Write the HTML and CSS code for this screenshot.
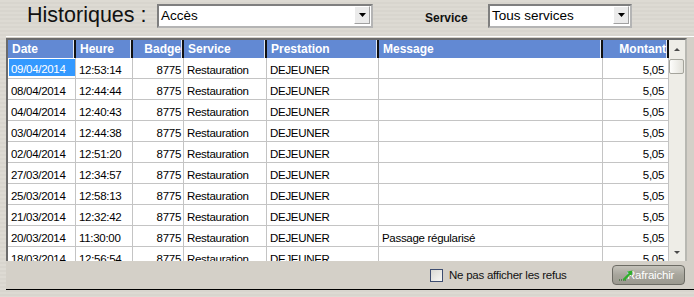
FILE: index.html
```html
<!DOCTYPE html>
<html lang="fr">

<head>
    <meta charset="UTF-8">
    <title>Historiques</title>
    <link rel="stylesheet" href="styles.css">
</head>

<body>
    <div class="toolbar">
        <div class="title">Historiques :</div>
        <div class="combo combo-acces">
            <span class="combo-text">Accès</span>
            <span class="combo-btn">
                <svg width="7" height="4" viewBox="0 0 7 4"><path d="M0 0h7L3.5 4z" fill="#000"/></svg>
            </span>
        </div>
        <div class="label">Service</div>
        <div class="combo combo-service">
            <span class="combo-text">Tous services</span>
            <span class="combo-btn">
                <svg width="7" height="4" viewBox="0 0 7 4"><path d="M0 0h7L3.5 4z" fill="#000"/></svg>
            </span>
        </div>
    </div>

    <div class="panel">
        <div class="grid">
            <div class="table">
                <div class="head">
                    <div class="hcell c-date">Date</div>
                    <div class="hcell c-heure">Heure</div>
                    <div class="hcell c-badge right">Badge</div>
                    <div class="hcell c-service">Service</div>
                    <div class="hcell c-prest">Prestation</div>
                    <div class="hcell c-msg">Message</div>
                    <div class="hcell c-montant right">Montant</div>
                </div>
                <div class="rows">
                    <div class="row">
                        <div class="cell c-date selected"><span>09/04/2014</span></div>
                        <div class="cell c-heure">12:53:14</div>
                        <div class="cell c-badge right">8775</div>
                        <div class="cell c-service">Restauration</div>
                        <div class="cell c-prest">DEJEUNER</div>
                        <div class="cell c-msg"></div>
                        <div class="cell c-montant right">5,05</div>
                    </div>
                    <div class="row">
                        <div class="cell c-date">08/04/2014</div>
                        <div class="cell c-heure">12:44:44</div>
                        <div class="cell c-badge right">8775</div>
                        <div class="cell c-service">Restauration</div>
                        <div class="cell c-prest">DEJEUNER</div>
                        <div class="cell c-msg"></div>
                        <div class="cell c-montant right">5,05</div>
                    </div>
                    <div class="row">
                        <div class="cell c-date">04/04/2014</div>
                        <div class="cell c-heure">12:40:43</div>
                        <div class="cell c-badge right">8775</div>
                        <div class="cell c-service">Restauration</div>
                        <div class="cell c-prest">DEJEUNER</div>
                        <div class="cell c-msg"></div>
                        <div class="cell c-montant right">5,05</div>
                    </div>
                    <div class="row">
                        <div class="cell c-date">03/04/2014</div>
                        <div class="cell c-heure">12:44:38</div>
                        <div class="cell c-badge right">8775</div>
                        <div class="cell c-service">Restauration</div>
                        <div class="cell c-prest">DEJEUNER</div>
                        <div class="cell c-msg"></div>
                        <div class="cell c-montant right">5,05</div>
                    </div>
                    <div class="row">
                        <div class="cell c-date">02/04/2014</div>
                        <div class="cell c-heure">12:51:20</div>
                        <div class="cell c-badge right">8775</div>
                        <div class="cell c-service">Restauration</div>
                        <div class="cell c-prest">DEJEUNER</div>
                        <div class="cell c-msg"></div>
                        <div class="cell c-montant right">5,05</div>
                    </div>
                    <div class="row">
                        <div class="cell c-date">27/03/2014</div>
                        <div class="cell c-heure">12:34:57</div>
                        <div class="cell c-badge right">8775</div>
                        <div class="cell c-service">Restauration</div>
                        <div class="cell c-prest">DEJEUNER</div>
                        <div class="cell c-msg"></div>
                        <div class="cell c-montant right">5,05</div>
                    </div>
                    <div class="row">
                        <div class="cell c-date">25/03/2014</div>
                        <div class="cell c-heure">12:58:13</div>
                        <div class="cell c-badge right">8775</div>
                        <div class="cell c-service">Restauration</div>
                        <div class="cell c-prest">DEJEUNER</div>
                        <div class="cell c-msg"></div>
                        <div class="cell c-montant right">5,05</div>
                    </div>
                    <div class="row">
                        <div class="cell c-date">21/03/2014</div>
                        <div class="cell c-heure">12:32:42</div>
                        <div class="cell c-badge right">8775</div>
                        <div class="cell c-service">Restauration</div>
                        <div class="cell c-prest">DEJEUNER</div>
                        <div class="cell c-msg"></div>
                        <div class="cell c-montant right">5,05</div>
                    </div>
                    <div class="row">
                        <div class="cell c-date">20/03/2014</div>
                        <div class="cell c-heure">11:30:00</div>
                        <div class="cell c-badge right">8775</div>
                        <div class="cell c-service">Restauration</div>
                        <div class="cell c-prest">DEJEUNER</div>
                        <div class="cell c-msg">Passage régularisé</div>
                        <div class="cell c-montant right">5,05</div>
                    </div>
                    <div class="row">
                        <div class="cell c-date">18/03/2014</div>
                        <div class="cell c-heure">12:56:54</div>
                        <div class="cell c-badge right">8775</div>
                        <div class="cell c-service">Restauration</div>
                        <div class="cell c-prest">DEJEUNER</div>
                        <div class="cell c-msg"></div>
                        <div class="cell c-montant right">5,05</div>
                    </div>
                </div>
            </div>
            <div class="scrollbar">
                <div class="sb-btn">
                    <svg width="6" height="3" viewBox="0 0 6 3"><path d="M0 3h6L3 0z" fill="#4a4a4a"/></svg>
                </div>
                <div class="sb-thumb"></div>
                <div class="sb-track"></div>
                <div class="sb-btn">
                    <svg width="6" height="3" viewBox="0 0 6 3"><path d="M0 0h6L3 3z" fill="#4a4a4a"/></svg>
                </div>
            </div>
        </div>

        <div class="footer">
            <span class="checkbox"></span>
            <span class="check-label">Ne pas afficher les refus</span>
            <button class="refresh">
                <svg class="refresh-icon" width="14" height="11" viewBox="0 0 14 11">
                    <path d="M0 10h7" stroke="#1d5a1d" stroke-width="1.2" stroke-dasharray="1 1"/>
                    <path d="M4.5 10L11 3.5" stroke="#2fae2a" stroke-width="2.4"/>
                    <path d="M8 1.5L13.5 0.5L12.5 6z" fill="#2fae2a"/>
                </svg>
                Rafraichir
            </button>
        </div>
    </div>
</body>

</html>
```

FILE: styles.css
```css
body {
    margin: 0;
    width: 694px;
    height: 297px;
    overflow: hidden;
    background: repeating-linear-gradient(to bottom, #dddad3 0, #dddad3 2px, #d8d5ce 2px, #d8d5ce 4px);
    font-family: "Liberation Sans", Arial, sans-serif;
    color: #111;
}

/* barre du haut */
.toolbar {
    display: flex;
    align-items: flex-start;
    height: 36px;
}

.title {
    width: 130px;
    margin: 3px 0 0 27px;
    font-size: 21.5px;
    line-height: 24px;
}

.combo {
    display: flex;
    height: 24px;
    margin-top: 4px;
    box-sizing: border-box;
    background: #fff;
    border: 2px solid;
    border-color: #7f7f7f #b4b4b4 #b4b4b4 #7f7f7f;
}

.combo-acces {
    width: 216px;
}

.combo-service {
    width: 144px;
}

.combo-text {
    flex: 1;
    padding-left: 2px;
    font-size: 13.5px;
    line-height: 20px;
    color: #000;
}

.combo-btn {
    display: flex;
    align-items: center;
    justify-content: center;
    width: 16px;
    height: 18px;
    margin: 0 1px 0 0;
    box-sizing: border-box;
    background: #ebebeb;
    border: 1px solid;
    border-color: #fff #a0a0a0 #a0a0a0 #fff;
}

.label {
    width: 115px;
    padding-left: 52px;
    box-sizing: border-box;
    margin-top: 11px;
    font-size: 12px;
    font-weight: bold;
    line-height: 14px;
}

/* cadre principal */
.panel {
    width: 688px;
    margin-left: 6px;
    background: #d4d0c8;
    border-top: 1px solid #fff;
    border-bottom: 1px solid #000;
}

.grid {
    display: flex;
    width: 681px;
    height: 223px;
    margin-top: 1px;
    box-sizing: border-box;
    border-left: 2px solid #6b6b6b;
    border-top: 2px solid #6b6b6b;
    border-right: 2px solid #b8b8b2;
}

.table {
    width: 661px;
}

.head {
    display: flex;
    height: 18px;
    background: #6289d3;
}

.hcell {
    box-sizing: border-box;
    padding: 0 1px 0 4px;
    border-right: 2px solid #111;
    box-shadow: inset -1px 0 0 #dfe7f6;
    font-size: 12px;
    font-weight: bold;
    line-height: 18px;
    color: #fff;
    white-space: nowrap;
}

.rows {
    height: 203px;
    overflow: hidden;
    background: #fff;
}

.row {
    display: flex;
}

.cell {
    box-sizing: border-box;
    height: 21px;
    padding: 3px 3px 0;
    border-right: 1px solid #c4c4c4;
    border-bottom: 1px solid #c4c4c4;
    font-size: 11.5px;
    line-height: 18px;
    letter-spacing: -0.3px;
    white-space: nowrap;
    overflow: hidden;
    color: #000;
}

.cell.selected {
    padding: 1px 0 0 1px;
}

.cell.selected span {
    display: block;
    height: 17px;
    box-sizing: border-box;
    padding: 2px 0 0 2px;
    line-height: 17px;
    background: #3399ff;
    color: #fff;
    overflow: hidden;
}

.right {
    text-align: right;
}

.c-date { width: 68px; }
.c-heure { width: 57px; }
.c-badge { width: 51px; }
.c-service { width: 83px; }
.c-prest { width: 112px; }
.c-msg { width: 224px; }
.c-montant { width: 66px; }

.cell.c-badge {
    padding-right: 2px;
}

.cell.c-montant {
    padding-right: 4px;
}

/* ascenseur */
.scrollbar {
    display: flex;
    flex-direction: column;
    width: 16px;
    background: #eeede7;
}

.sb-btn {
    display: flex;
    align-items: center;
    justify-content: center;
    height: 18px;
}

.sb-thumb {
    width: 15px;
    height: 15px;
    margin-top: 1px;
    box-sizing: border-box;
    border: 1px solid #a4a49c;
    border-radius: 2px;
    background: linear-gradient(to right, #fdfdfb, #e2e1da);
}

.sb-track {
    flex: 1;
}

/* bas de page */
.footer {
    display: flex;
    align-items: center;
    height: 28px;
    padding-right: 9px;
}

.checkbox {
    width: 13px;
    height: 13px;
    margin-left: 424px;
    box-sizing: border-box;
    border: 1px solid #3d4d70;
    background: linear-gradient(135deg, #d9d9d3, #f7f7f4);
}

.check-label {
    margin-left: 6px;
    font-size: 11.5px;
    letter-spacing: -0.25px;
    color: #111;
}

.refresh {
    position: relative;
    width: 73px;
    height: 20px;
    margin-left: auto;
    padding: 0 0 0 14px;
    box-sizing: border-box;
    border: 1px solid #6c6b64;
    border-radius: 4px;
    background: linear-gradient(to bottom, #c4c2ba, #a7a59c 50%, #9b998f);
    font-family: "Liberation Sans", Arial, sans-serif;
    font-size: 11.5px;
    letter-spacing: -0.2px;
    color: #fff;
    text-align: left;
}

.refresh-icon {
    position: absolute;
    left: 6px;
    top: 4px;
}
```
